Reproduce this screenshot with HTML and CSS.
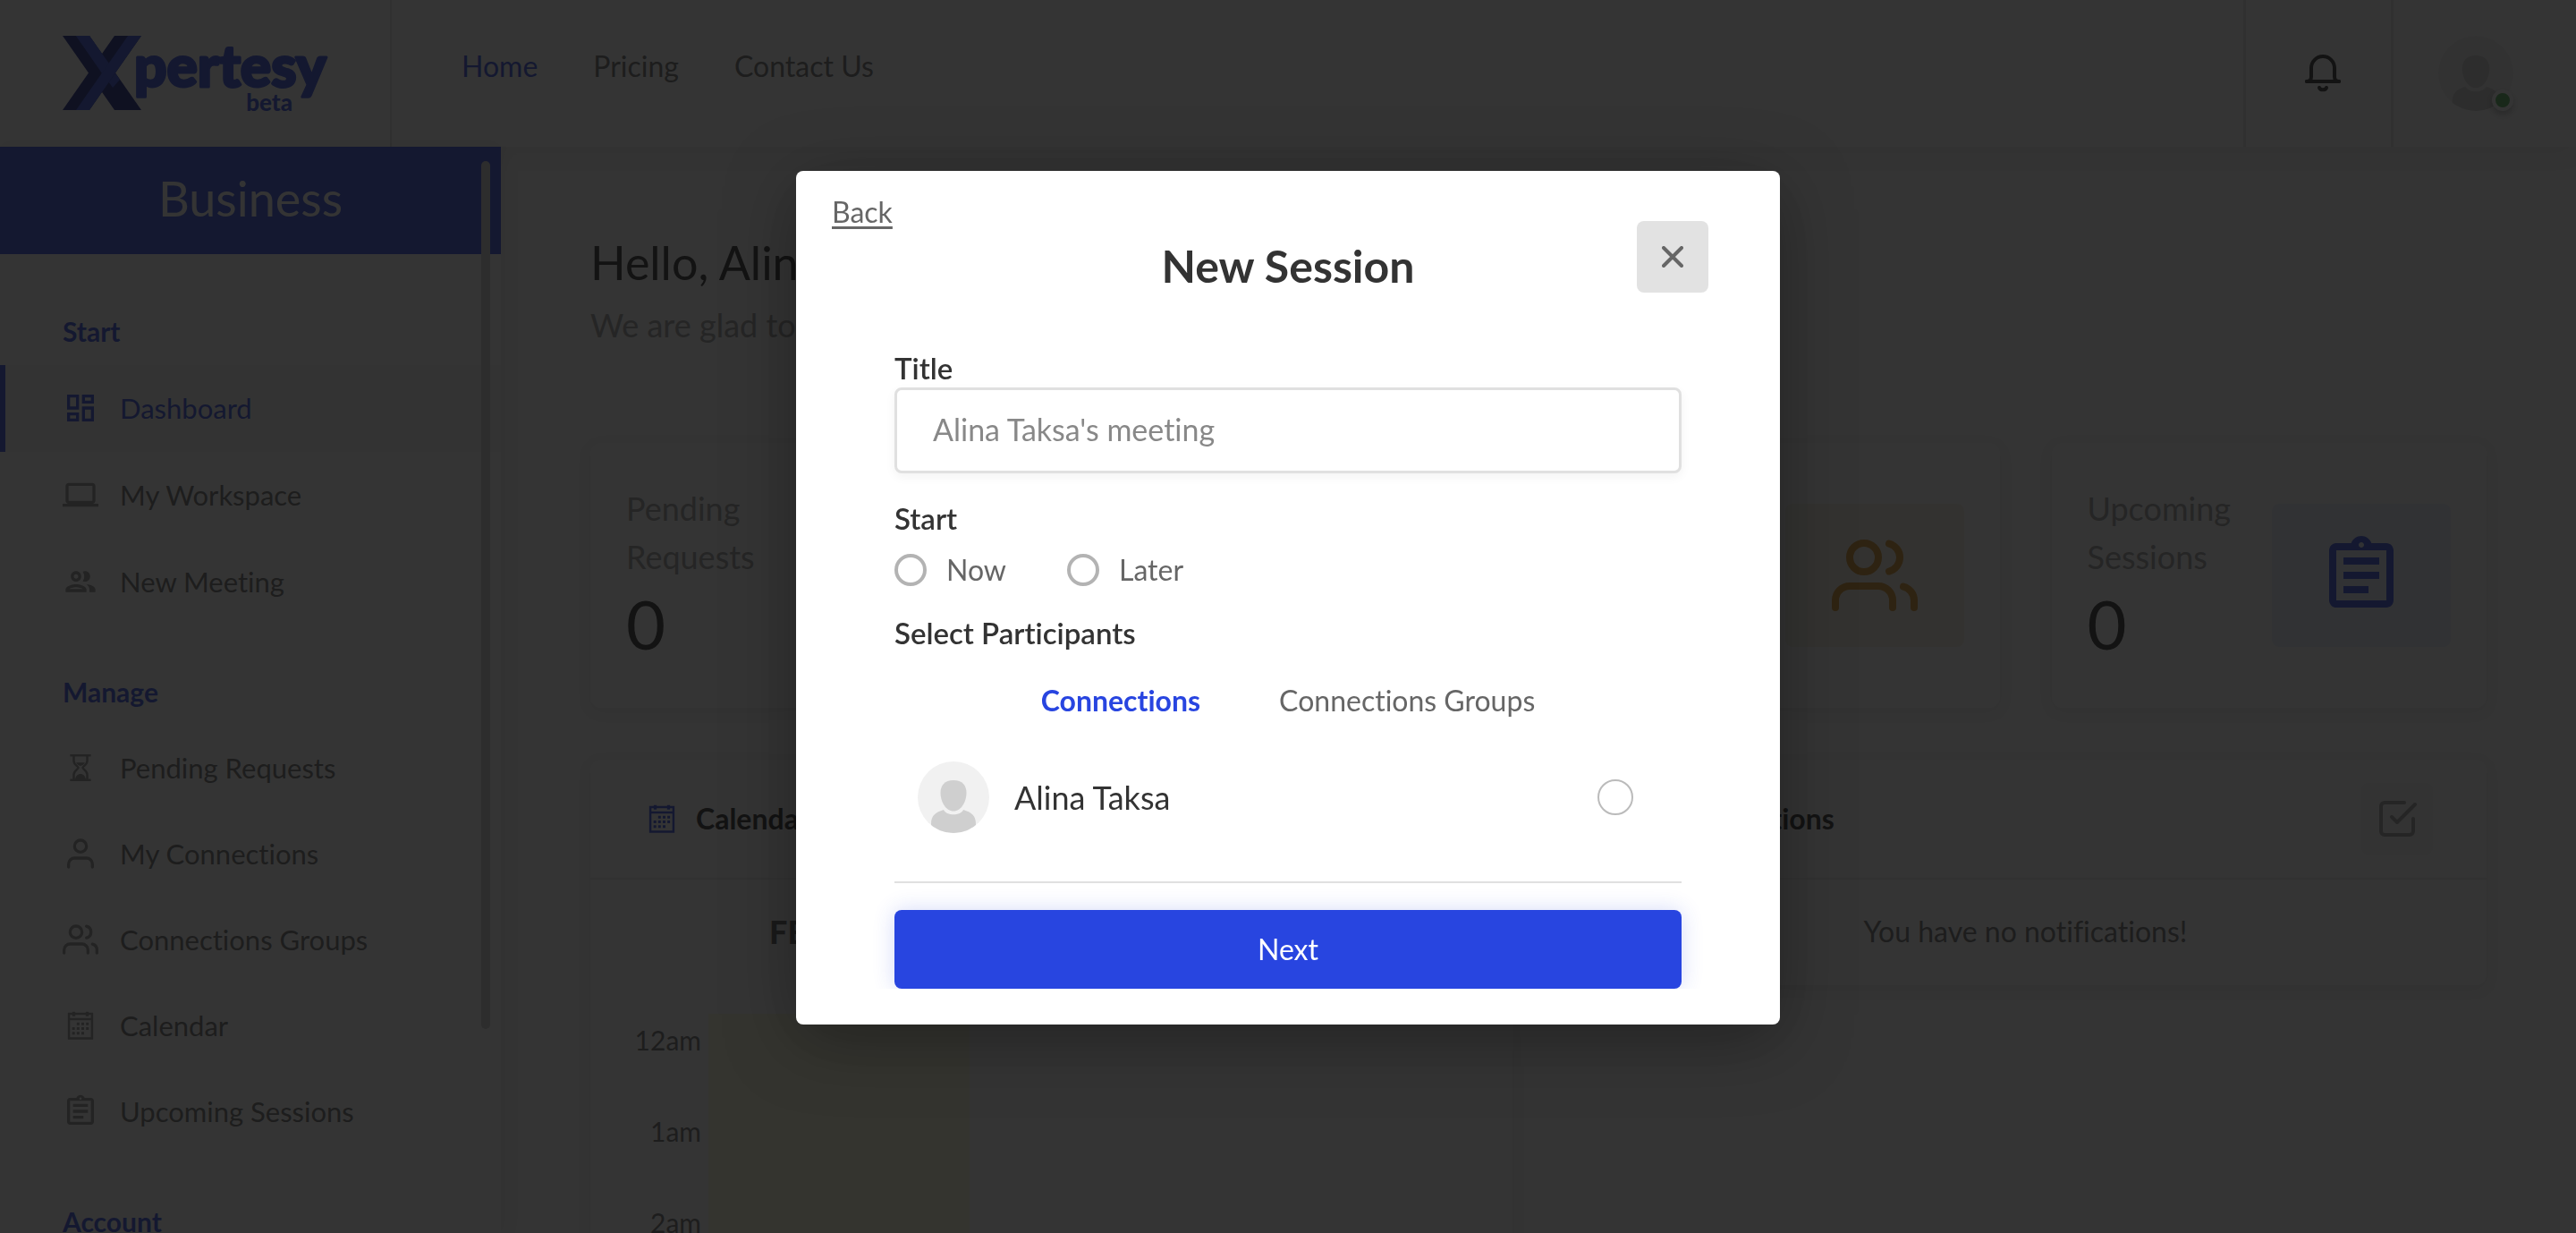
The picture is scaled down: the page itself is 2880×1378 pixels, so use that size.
FILE: index.html
```html
<!DOCTYPE html>
<html lang="en">
<head>
<meta charset="utf-8">
<title>Xpertesy</title>
<link rel="stylesheet" href="styles.css">
</head>
<body>
<svg class="sprite" aria-hidden="true">
  <symbol id="i-dashboard" viewBox="0 0 24 24"><path d="M19 5v2h-4V5h4M9 5v6H5V5h4m10 8v6h-4v-6h4M9 17v2H5v-2h4M21 3h-8v6h8V3zM11 3H3v10h8V3zm10 8h-8v10h8V11zm-10 4H3v6h8v-6z"/></symbol>
  <symbol id="i-laptop" viewBox="0 0 24 24"><path d="M20 18c1.100 0 2-.9 2-2V6c0-1.100-.9-2-2-2H4c-1.100 0-2 .9-2 2v10c0 1.100.9 2 2 2H0v2h24v-2h-4zM4 6h16v10H4V6z"/></symbol>
  <symbol id="i-people" viewBox="0 0 24 24"><path d="M9 13.750c-2.340 0-7 1.170-7 3.500V19h14v-1.750c0-2.330-4.660-3.500-7-3.500zM4.340 17c.84-.58 2.870-1.250 4.660-1.250s3.820.67 4.660 1.250H4.340zM9 12c1.930 0 3.500-1.570 3.500-3.500S10.930 5 9 5 5.500 6.570 5.500 8.500 7.070 12 9 12zm0-5c.83 0 1.500.67 1.500 1.500S9.830 10 9 10s-1.500-.67-1.500-1.500S8.170 7 9 7zm7.040 6.810c1.160.84 1.960 1.960 1.960 3.440V19h4v-1.750c0-2.020-3.500-3.170-5.960-3.440zM15 12c1.930 0 3.500-1.570 3.500-3.500S16.930 5 15 5c-.54 0-1.040.13-1.500.35.63.89 1 1.980 1 3.150s-.37 2.260-1 3.150c.46.22.96.35 1.500.35z"/></symbol>
  <symbol id="i-hourglass" viewBox="0 0 24 24"><path d="M5 3h14v1.500H5zM5 19.500h14V21H5z"/><path d="M7.500 4v3.500c0 2.500 3 3.500 3 4.500s-3 2-3 4.500V20M16.500 4v3.500c0 2.500-3 3.500-3 4.500s3 2 3 4.500V20" fill="none" stroke="currentColor" stroke-width="1.500"/><path d="M9 8.500h6c-.6 1.200-1.900 1.900-3 2.300-1.100-.4-2.400-1.100-3-2.300zM8.500 20c0-2.200 1.600-3.800 3.500-3.800s3.500 1.600 3.500 3.800z"/></symbol>
  <symbol id="i-user" viewBox="0 0 24 24"><g fill="none" stroke="currentColor" stroke-width="2" stroke-linecap="round" stroke-linejoin="round"><path d="M20 21v-2a4 4 0 0 0-4-4H8a4 4 0 0 0-4 4v2"/><circle cx="12" cy="7" r="4"/></g></symbol>
  <symbol id="i-users" viewBox="0 0 24 24"><g fill="none" stroke="currentColor" stroke-width="2" stroke-linecap="round" stroke-linejoin="round"><path d="M17 21v-2a4 4 0 0 0-4-4H5a4 4 0 0 0-4 4v2"/><circle cx="9" cy="7" r="4"/><path d="M23 21v-2a4 4 0 0 0-3-3.870M16 3.130a4 4 0 0 1 0 7.750"/></g></symbol>
  <symbol id="i-calendar" viewBox="0 0 24 24"><path d="M3.500 3.500h17v18h-17zM5 8.500V20h14V8.500zM5 5v2h14V5z" fill-rule="evenodd"/><path d="M6.500 2.800h2v3h-2zM15.500 2.800h2v3h-2zM9.500 10h1.800v1.800H9.500zM12.600 10h1.800v1.800h-1.800zM15.700 10h1.800v1.800h-1.800zM6.400 13.200h1.800V15H6.400zM9.500 13.200h1.800V15H9.500zM12.600 13.200h1.800V15h-1.800zM15.700 13.200h1.800V15h-1.800zM6.400 16.400h1.800v1.800H6.400zM9.500 16.400h1.800v1.800H9.500zM12.600 16.400h1.800v1.800h-1.800z"/></symbol>
  <symbol id="i-assignment" viewBox="0 0 24 24"><path d="M7 15h7v2H7zm0-4h10v2H7zm0-4h10v2H7zm12-4h-4.180C14.400 1.840 13.300 1 12 1c-1.300 0-2.400.84-2.820 2H5c-.14 0-.27.01-.4.04-.39.08-.74.28-1.010.55-.18.18-.33.4-.43.64-.1.23-.16.49-.16.77v14c0 .27.06.54.16.78s.25.45.43.64c.27.27.62.47 1.010.55.13.02.26.03.4.03h14c1.100 0 2-.9 2-2V5c0-1.100-.9-2-2-2zm-7-.25c.41 0 .75.34.75.75s-.34.75-.75.75-.75-.34-.75-.75.34-.75.75-.75zM19 19H5V5h14v14z"/></symbol>
  <symbol id="i-check" viewBox="0 0 24 24"><g fill="none" stroke="currentColor" stroke-width="2" stroke-linecap="round" stroke-linejoin="round"><path d="M9 11l3 3L22 4"/><path d="M21 12v7a2 2 0 0 1-2 2H5a2 2 0 0 1-2-2V5a2 2 0 0 1 2-2h11"/></g></symbol>
  <symbol id="i-bell" viewBox="0 0 40 42"><g fill="none" stroke="currentColor" stroke-width="4" stroke-linecap="round" stroke-linejoin="round"><path d="M2 30h36"/><path d="M2 30c3 0 5-2 5-5V15a13 13 0 0 1 26 0v10c0 3 2 5 5 5"/><path d="M16 37c1 3 7 3 8 0"/></g></symbol>
  <symbol id="i-avatar" viewBox="0 0 80 80"><clipPath id="round"><circle cx="40" cy="40" r="40"/></clipPath><g clip-path="url(#round)"><path d="M0 0h80v80H0z" fill="#f1f1f1"/><path d="M40 21c10 0 14.500 6 14.500 14 0 10-6 20.500-14.500 20.500S25.500 45 25.500 35c0-8 4.500-14 14.500-14z" fill="#cfcfcf"/><path d="M29 54c3 7 19 7 22 0 9 3 14 6 14 16v10H15V70c0-10 5-13 14-16z" fill="#cfcfcf"/></g></symbol>
</svg>

<div class="app">
  <header class="topbar">
    <a class="brand" href="#" aria-label="Xpertesy beta">
      <svg class="brand__logo" viewBox="0 0 300 84">
        <g>
          <path d="M0 0h30l58 83H58z" fill="#0a1480"/>
          <path d="M15 0h15l34 49-8 9z" fill="#2845e0"/>
          <path d="M58 0h30L30 83H0z" fill="#0a1480"/>
          <path d="M73 0h15L30 83H15z" fill="#2845e0"/>
          <path d="M15 0h15l22 31-8 11z" fill="#2845e0"/>
        </g>
        <text class="brand__name" x="80" y="57">pertesy</text>
        <text class="brand__tag" x="257" y="84">beta</text>
      </svg>
    </a>
    <nav class="topnav">
      <a class="topnav__link topnav__link--active" href="#">Home</a>
      <a class="topnav__link" href="#">Pricing</a>
      <a class="topnav__link" href="#">Contact Us</a>
    </nav>
    <button class="topbar__bell" aria-label="Notifications"><svg class="bell"><use href="#i-bell"/></svg></button>
    <button class="topbar__user" aria-label="Profile">
      <span class="presence"><svg class="presence__photo"><use href="#i-avatar"/></svg><span class="presence__dot"></span></span>
    </button>
  </header>

  <div class="body">
    <aside class="sidebar">
      <div class="sidebar__banner">Business</div>
      <nav class="sidebar__nav">
        <h2 class="menu-title">Start</h2>
        <ul class="menu">
          <li><a class="menu__link menu__link--active" href="#"><svg class="icon"><use href="#i-dashboard"/></svg>Dashboard</a></li>
          <li><a class="menu__link" href="#"><svg class="icon"><use href="#i-laptop"/></svg>My Workspace</a></li>
          <li><a class="menu__link" href="#"><svg class="icon"><use href="#i-people"/></svg>New Meeting</a></li>
        </ul>
        <h2 class="menu-title">Manage</h2>
        <ul class="menu menu--compact">
          <li><a class="menu__link" href="#"><svg class="icon"><use href="#i-hourglass"/></svg>Pending Requests</a></li>
          <li><a class="menu__link" href="#"><svg class="icon"><use href="#i-user"/></svg>My Connections</a></li>
          <li><a class="menu__link" href="#"><svg class="icon"><use href="#i-users"/></svg>Connections Groups</a></li>
          <li><a class="menu__link" href="#"><svg class="icon"><use href="#i-calendar"/></svg>Calendar</a></li>
          <li><a class="menu__link" href="#"><svg class="icon"><use href="#i-assignment"/></svg>Upcoming Sessions</a></li>
        </ul>
        <h2 class="menu-title">Account</h2>
      </nav>
      <span class="sidebar__thumb"></span>
    </aside>

    <main class="main">
      <h1 class="greeting">Hello, Alina Taksa!</h1>
      <p class="subtitle">We are glad to see you again!</p>

      <section class="stats">
        <article class="card stat">
          <div class="stat__text"><h3 class="stat__label">Pending Requests</h3><p class="stat__value">0</p></div>
          <div class="tile"><svg class="tile__icon"><use href="#i-hourglass"/></svg></div>
        </article>
        <article class="card stat">
          <div class="stat__text"><h3 class="stat__label">My Contacts</h3><p class="stat__value">1</p></div>
          <div class="tile"><svg class="tile__icon"><use href="#i-user"/></svg></div>
        </article>
        <article class="card stat">
          <div class="stat__text"><h3 class="stat__label">My Groups</h3><p class="stat__value">0</p></div>
          <div class="tile tile--amber"><svg class="tile__icon"><use href="#i-users"/></svg></div>
        </article>
        <article class="card stat">
          <div class="stat__text"><h3 class="stat__label">Upcoming Sessions</h3><p class="stat__value">0</p></div>
          <div class="tile"><svg class="tile__icon"><use href="#i-assignment"/></svg></div>
        </article>
      </section>

      <section class="panels">
        <article class="card">
          <header class="panel__head"><svg class="icon panel__icon"><use href="#i-calendar"/></svg><h3 class="panel__title">Calendar</h3></header>
          <h4 class="month">FEBRUARY 2021</h4>
          <table class="hours">
            <tr><th scope="row">12am</th><td class="hours__today"></td><td></td><td></td></tr>
            <tr><th scope="row">1am</th><td class="hours__today"></td><td></td><td></td></tr>
            <tr><th scope="row">2am</th><td class="hours__today"></td><td></td><td></td></tr>
          </table>
        </article>
        <article class="card">
          <header class="panel__head">
            <svg class="icon panel__icon"><use href="#i-bell"/></svg><h3 class="panel__title">Notifications</h3>
            <button class="mark" aria-label="Mark all as read"><svg class="mark__icon"><use href="#i-check"/></svg></button>
          </header>
          <p class="empty">You have no notifications!</p>
        </article>
      </section>
    </main>
  </div>
</div>

<div class="overlay">
  <form class="modal" role="dialog" aria-labelledby="modal-title">
    <a class="modal__back" href="#">Back</a>
    <h2 class="modal__title" id="modal-title">New Session</h2>
    <button class="modal__close" type="button" aria-label="Close"><svg class="modal__cross" viewBox="0 0 24 24"><path d="M2 2l20 20M22 2L2 22"/></svg></button>

    <label class="label" for="title">Title</label>
    <input class="field" id="title" type="text" placeholder="Alina Taksa's meeting">

    <fieldset class="start">
      <legend class="label">Start</legend>
      <div class="choices">
        <label class="choice"><input class="choice__input" type="radio" name="start">Now</label>
        <label class="choice"><input class="choice__input" type="radio" name="start">Later</label>
      </div>
    </fieldset>

    <h3 class="label label--participants">Select Participants</h3>
    <div class="tabs" role="tablist">
      <button class="tab tab--active" type="button" role="tab" aria-selected="true">Connections</button>
      <button class="tab" type="button" role="tab" aria-selected="false">Connections Groups</button>
    </div>
    <label class="person">
      <svg class="person__photo"><use href="#i-avatar"/></svg>
      <span class="person__name">Alina Taksa</span>
      <input class="person__check" type="checkbox">
    </label>
    <div class="modal__foot"><button class="next" type="button">Next</button></div>
  </form>
</div>
</body>
</html>
```
FILE: styles.css
```css
:root {
  --blue: #2845e0;
  --ink: #333;
  --text: #666;
  --muted: #999;
  --line: #e0e0e0;
}

* { box-sizing: border-box; }

body {
  margin: 0;
  overflow: hidden;
  font-family: Lato, "Open Sans", sans-serif;
  font-size: 32px;
  line-height: 48px;
  font-variant-ligatures: none;
  color: var(--text);
  background: #fafafa;
}

h1, h2, h3, h4, p, ul, fieldset { margin: 0; padding: 0; border: 0; }
ul { list-style: none; }
a { color: inherit; text-decoration: none; }
button { font: inherit; color: inherit; background: none; border: 0; padding: 0; }
svg { display: block; fill: currentColor; }
.sprite { position: absolute; width: 0; height: 0; }
.icon { width: 40px; height: 40px; flex: none; }

.app { display: flex; flex-direction: column; height: 100vh; overflow: hidden; }

/* Top bar */
.topbar {
  display: flex;
  flex: none;
  height: 164px;
  background: #fff;
  box-shadow: 0 8px 24px rgba(0, 0, 0, .06);
  position: relative;
}
.brand { display: flex; align-items: center; width: 438px; padding-left: 70px; border-right: 2px solid var(--line); }
.brand__logo { width: 300px; height: 84px; overflow: visible; }
.brand__name { font-size: 64px; font-weight: 900; fill: var(--blue); stroke: var(--blue); stroke-width: 3; stroke-linejoin: round; }
.brand__tag { font-size: 26px; font-weight: 900; fill: var(--blue); text-anchor: end; }
.topnav { display: flex; flex: 1; gap: 62px; padding: 50px 78px; }
.topnav__link--active { color: var(--blue); }
.topbar__bell { width: 168px; padding-left: 10px; border-left: 3px solid var(--line); border-right: 3px solid var(--line); display: grid; place-items: center; color: #222; }
.bell { width: 40px; height: 42px; }
.topbar__user { width: 204px; padding: 40px 50px; }
.presence { display: block; position: relative; width: 84px; height: 84px; }
.presence__photo { width: 84px; height: 84px; }
.presence__dot {
  position: absolute;
  right: 0;
  bottom: 0;
  width: 24px;
  height: 24px;
  border: 4px solid #fff;
  border-radius: 50%;
  background: #4caf50;
  box-shadow: 0 4px 8px rgba(0, 0, 0, .3);
}

.body { display: flex; flex: 1; min-height: 0; }

/* Sidebar */
.sidebar { position: relative; flex: none; width: 560px; overflow: hidden; background: #fff; box-shadow: 0 0 20px rgba(0, 0, 0, .1); }
.sidebar__banner { height: 120px; line-height: 116px; text-align: center; font-size: 54px; color: #fff; background: var(--blue); }
.sidebar__nav { padding-top: 12px; }
.sidebar__thumb { position: absolute; top: 16px; right: 12px; width: 10px; height: 970px; border-radius: 5px; background: #ccc; }
.menu-title { padding: 54px 70px 18px; font-size: 30px; line-height: 40px; font-weight: 700; color: var(--blue); }
.menu__link { display: flex; align-items: center; gap: 24px; height: 97px; padding: 0 0 2px 64px; border-left: 6px solid transparent; font-size: 31px; }
.menu--compact .menu__link { height: 96px; }
.menu__link .icon { color: #8c8c8c; }
.menu__link--active { color: var(--blue); border-left-color: var(--blue); background: #f7f7f7; }
.menu__link--active .icon { color: inherit; }

/* Dashboard */
.main { flex: 1; min-width: 0; padding: 93px 100px 0; }
.greeting { font-size: 52px; line-height: 72px; font-weight: 400; color: #222; }
.subtitle { margin-top: 10px; font-size: 36px; color: var(--muted); }
.card { background: #fff; border-radius: 12px; box-shadow: 0 4px 16px rgba(0, 0, 0, .08); }
.stats { display: grid; grid-template-columns: repeat(4, minmax(0, 1fr)); gap: 58px; margin-top: 108px; }
.stat { display: flex; align-items: center; justify-content: space-between; gap: 24px; height: 296px; padding: 0 40px; }
.stat__label { font-size: 36px; line-height: 54px; font-weight: 400; color: var(--muted); }
.stat__value { font-size: 76px; line-height: 96px; color: #222; }
.tile { display: grid; place-items: center; flex: none; width: 200px; height: 160px; border-radius: 8px; color: var(--blue); background: #eaf1fa; }
.tile--amber { color: #d48a1c; background: #f6f2e4; }
.tile__icon { width: 96px; height: 96px; }

.panels { display: grid; grid-template-columns: repeat(2, minmax(0, 1fr)); gap: 58px; align-items: start; margin-top: 58px; }
.panel__head { display: flex; align-items: center; gap: 18px; height: 134px; padding: 0 60px; border-bottom: 2px solid #ebebeb; }
.panel__icon { color: var(--blue); }
.panel__title { flex: 1; font-size: 32px; font-weight: 700; color: #222; }
.mark { display: grid; place-items: center; width: 80px; height: 80px; border-radius: 8px; background: #f3f3f3; }
.mark__icon { width: 48px; height: 48px; color: var(--muted); }
.empty { padding: 34px 0 36px; text-align: center; }
.month { padding: 34px 200px 68px; font-size: 36px; font-weight: 900; color: #555; }
.hours { width: calc(100% - 48px); margin: 0 24px; border-collapse: collapse; table-layout: fixed; }
.hours tr { height: 102px; }
.hours th { width: 108px; padding: 0 8px 0 0; vertical-align: top; text-align: right; font-size: 30px; line-height: 58px; font-weight: 400; }
.hours__today { background: #fafadc; }

/* Dialog */
.overlay { position: fixed; inset: 0; display: flex; justify-content: center; align-items: flex-start; padding-top: 191px; background: rgba(17, 17, 17, .85); }
.modal { position: relative; width: 1100px; padding: 22px 110px 40px; border-radius: 8px; background: #fff; box-shadow: 0 16px 80px rgba(0, 0, 0, .35); }
.modal__back { display: block; width: max-content; margin-left: -70px; text-decoration: underline; text-underline-offset: 4px; text-decoration-thickness: 3px; }
.modal__title { margin-top: 6px; font-size: 50px; line-height: 60px; font-weight: 700; text-align: center; color: var(--ink); }
.modal__close { position: absolute; top: 56px; right: 80px; display: grid; place-items: center; width: 80px; height: 80px; border-radius: 8px; background: #e2e2e2; }
.modal__cross { width: 24px; height: 24px; stroke: var(--text); stroke-width: 4; stroke-linecap: round; }
.label { display: block; padding: 0; font-size: 33px; line-height: 44px; font-weight: 600; color: var(--ink); }
.modal__title + .modal__close + .label { margin-top: 62px; }
.field {
  display: block;
  width: 100%;
  height: 96px;
  padding: 0 40px 4px;
  border: 3px solid var(--line);
  border-radius: 8px;
  font: inherit;
  font-size: 34px;
  color: var(--ink);
  background: #fff;
  box-shadow: 0 4px 12px rgba(0, 0, 0, .05);
}
.field::placeholder { color: #888; }
.start { margin-top: 28px; }
.start .label { margin-bottom: 14px; }
.choices { display: flex; gap: 68px; }
.choice { display: flex; align-items: center; gap: 22px; line-height: 44px; }
.choice__input, .person__check { appearance: none; margin: 0; flex: none; border-radius: 50%; background: #fff; }
.choice__input { width: 36px; height: 36px; border: 4px solid #b3b3b3; }
.label--participants { margin-top: 26px; }
.tabs { display: flex; justify-content: center; gap: 88px; margin-top: 30px; }
.tab { line-height: 48px; }
.tab--active { font-weight: 700; color: var(--blue); }
.person { display: flex; align-items: center; gap: 28px; margin-top: 44px; padding: 0 54px 54px 26px; border-bottom: 2px solid var(--line); }
.person__photo { width: 80px; height: 80px; }
.person__name { flex: 1; font-size: 36px; color: var(--ink); }
.person__check { width: 40px; height: 40px; border: 2px solid #bbb; }
.modal__foot { margin: 0 -40px; padding: 30px 40px 0; overflow: hidden; }
.next { display: block; width: 100%; height: 88px; border-radius: 8px; color: #fff; background: var(--blue); box-shadow: 0 0 24px rgba(40, 69, 224, .2); }
```
